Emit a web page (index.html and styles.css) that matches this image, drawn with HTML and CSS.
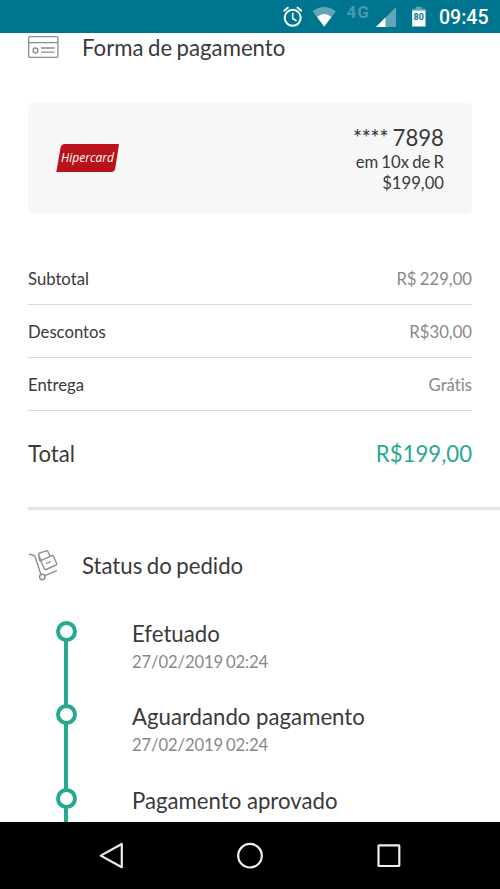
FILE: index.html
```html
<!DOCTYPE html>
<html lang="pt-BR">
<head>
<meta charset="utf-8">
<title>Pedido</title>
<link rel="stylesheet" href="styles.css">
</head>
<body>
<header class="statusbar">
  <svg class="status-icons" width="160" height="33" viewBox="270 0 160 33" aria-hidden="true">
    <g fill="none" stroke="#fff" stroke-width="2" stroke-linecap="round">
      <circle cx="292.700" cy="17.800" r="8"/>
      <path d="M292.700 13.300v5.200l3.300 2" stroke-width="1.600"/>
      <path d="M284.200 10.700l3.600-3M301.200 10.700l-3.600-3"/>
    </g>
    <path d="M312.500 11.200Q324 2.600 336 11.200L324.200 26.500z" fill="#5fa6b7"/>
    <path d="M317 17.100Q324.200 10.800 331.500 17.100L324.200 26.500z" fill="#fff"/>
    <path d="M396 7v20h-20z" fill="#5fa6b7"/>
    <path d="M385.500 17.500v9.500h-9.500z" fill="#fff"/>
    <path d="M412.200 10.500v-1.800h3.800v-1.900h5.700v1.900h3.800v1.800z" fill="#5fa6b7"/>
    <path d="M412.200 10.500h13.300v16h-13.300z" fill="#fff"/>
    <text class="net" x="346.500" y="18">4G</text>
    <text class="batt" x="418.700" y="20" text-anchor="middle">80</text>
  </svg>
  <span class="clock">09:45</span>
</header>

<main class="screen">
  <section class="payment">
    <h2 class="heading">
      <svg class="heading-icon" width="32" height="24" viewBox="0 0 32 24" fill="none" stroke="#8c8c8c" stroke-width="1.300" aria-hidden="true">
        <rect x=".7" y=".7" width="29.200" height="20.600" rx="1.300"/>
        <path d="M.7 6.700h29.200M13 12h13.500M13 16.200h13.500"/>
        <circle cx="7.500" cy="14.500" r="2.500"/>
      </svg>
      <span>Forma de pagamento</span>
    </h2>
    <div class="card">
      <svg class="brand" width="64" height="30" viewBox="0 0 64 30" aria-label="Hipercard">
        <path d="M9 1H63L59.200 25.500Q58.500 29 55 29H.3L4.500 5Q5.300 1 9 1z" fill="#b9121b"/>
        <text class="brand-name" x="5" y="18.800" textLength="53" lengthAdjust="spacingAndGlyphs">Hipercard</text>
      </svg>
      <div class="card-info">
        <div class="card-number"><span class="mask">****</span> 7898</div>
        <div class="card-plan">em 10x de R<br>$199,00</div>
      </div>
    </div>
    <dl class="summary">
      <div class="line"><dt>Subtotal</dt><dd>R$ 229,00</dd></div>
      <div class="line"><dt>Descontos</dt><dd>R$30,00</dd></div>
      <div class="line"><dt>Entrega</dt><dd>Grátis</dd></div>
      <div class="total"><dt>Total</dt><dd>R$199,00</dd></div>
    </dl>
  </section>

  <section class="order">
    <h2 class="heading">
      <svg class="heading-icon" width="32" height="32" viewBox="0 1 32 32" fill="none" stroke="#8f8f8f" stroke-width="1.400" stroke-linecap="round" stroke-linejoin="round" aria-hidden="true">
        <path d="M1.500 5.300l3.800 1Q6.700 6.700 7.200 8L13 25.700M17 26.700l11.500-5"/>
        <circle cx="14.300" cy="28" r="2.700"/>
        <path d="M11.500 11.500L10.800 5.300Q10.700 4.300 11.700 3.900L18.500 1.800Q19.500 1.500 19.900 2.500L21.800 7M12.700 11.600L24 6.700Q25 6.300 25.600 7.200L28.600 14.500Q29 15.500 28 16L18 20.500Q17 20.900 16.500 19.900L13 12.700M10.500 5L13 12.200M18.500 14.300l3.700-1.500"/>
      </svg>
      <span>Status do pedido</span>
    </h2>
    <ol class="timeline">
      <li class="step"><div class="step-name">Efetuado</div><div class="step-date">27/02/2019 02:24</div></li>
      <li class="step"><div class="step-name">Aguardando pagamento</div><div class="step-date">27/02/2019 02:24</div></li>
      <li class="step"><div class="step-name">Pagamento aprovado</div><div class="step-date">27/02/2019 02:24</div></li>
    </ol>
  </section>
</main>

<nav class="navbar">
  <svg width="30" height="30" viewBox="0 0 30 30" aria-label="Voltar"><path d="M25.800 3v23.200L4.700 14.600z"/></svg>
  <svg width="30" height="30" viewBox="0 0 30 30" aria-label="Início"><circle cx="15" cy="14.700" r="11.800"/></svg>
  <svg width="30" height="30" viewBox="0 0 30 30" aria-label="Recentes"><rect x="4.500" y="4.400" width="20.800" height="20.600" rx=".5"/></svg>
</nav>
</body>
</html>
```

FILE: styles.css
```css
*,
*::before,
*::after { box-sizing: border-box; }

body {
  margin: 0;
  height: 889px;
  display: flex;
  flex-direction: column;
  overflow: hidden;
  background: #fff;
  color: #3a3a3a;
  font-family: Lato, "Liberation Sans", sans-serif;
  font-variant-ligatures: none;
}

.statusbar {
  flex: 0 0 33px;
  display: flex;
  align-items: center;
  justify-content: flex-end;
  padding-right: 11px;
  background: #00758f;
  color: #fff;
}

.status-icons { margin-right: 9px; }

.net {
  font: 700 17px Roboto, sans-serif;
  letter-spacing: 1px;
  fill: #479bae;
}

.batt {
  font: 700 9px Roboto, sans-serif;
  fill: #00758f;
}

.clock {
  width: 50px;
  padding-top: 2px;
  font: 500 19.500px/31px Roboto, sans-serif;
  white-space: nowrap;
}

.screen {
  flex: 0 0 789px;
  overflow: hidden;
}

.payment { padding: 0 28px; }

.heading {
  display: flex;
  align-items: center;
  height: 30px;
  margin: 0;
  font-size: 22.200px;
  font-weight: 400;
  line-height: 30px;
  word-spacing: -1.200px;
}

.heading-icon {
  flex: none;
  margin-right: 22px;
}

.card {
  display: flex;
  justify-content: space-between;
  height: 111px;
  margin-top: 40px;
  padding: 20px 28px 0;
  border-radius: 5px;
  background: #f7f7f7;
}

.brand { margin-top: 20px; }

.brand-name {
  font: italic 13.500px "Open Sans", sans-serif;
  fill: #fff;
}

.card-info { text-align: right; }

.card-number {
  font-size: 22.200px;
  line-height: 29px;
  word-spacing: -1.200px;
}

.mask { letter-spacing: -.6px; }

.card-plan {
  font-size: 16.700px;
  line-height: 20.500px;
  word-spacing: -1.100px;
}

.summary { margin: 38px 0 0; }

.line,
.total {
  display: flex;
  justify-content: space-between;
  align-items: center;
}

.line {
  height: 53px;
  padding-top: 2px;
  border-bottom: 1px solid #d9d9d9;
  font-size: 16.700px;
  word-spacing: -1px;
}

.line dd { color: #888; }

.summary dd { margin: 0; }

.total {
  height: 84px;
  font-size: 22.200px;
}

.total dd { color: #26a991; }

.order {
  margin: 12px 0 0 28px;
  padding-top: 41px;
  border-top: 3px solid #e5e5e5;
}

.timeline {
  margin: 39px 0 0;
  padding: 0;
  list-style: none;
}

.step {
  position: relative;
  height: 83.300px;
  padding-left: 104px;
}

.step::before {
  content: "";
  position: absolute;
  left: 36px;
  top: 12px;
  width: 4px;
  height: 83.300px;
  background: #26a991;
}

.step::after {
  content: "";
  position: absolute;
  left: 27.500px;
  top: 1px;
  width: 21px;
  height: 21px;
  border: 4px solid #26a991;
  border-radius: 50%;
  background: #fff;
}

.step-name {
  font-size: 22.200px;
  line-height: 28px;
}

.step-date {
  color: #888;
  font-size: 16.700px;
  line-height: 29px;
  letter-spacing: -.15px;
  word-spacing: -1.200px;
}

.navbar {
  flex: 0 0 67px;
  display: flex;
  align-items: center;
  justify-content: space-between;
  padding: 0 96px;
  background: #000;
}

.navbar svg {
  fill: none;
  stroke: #eee;
  stroke-width: 2.200;
  stroke-linejoin: round;
}
```
